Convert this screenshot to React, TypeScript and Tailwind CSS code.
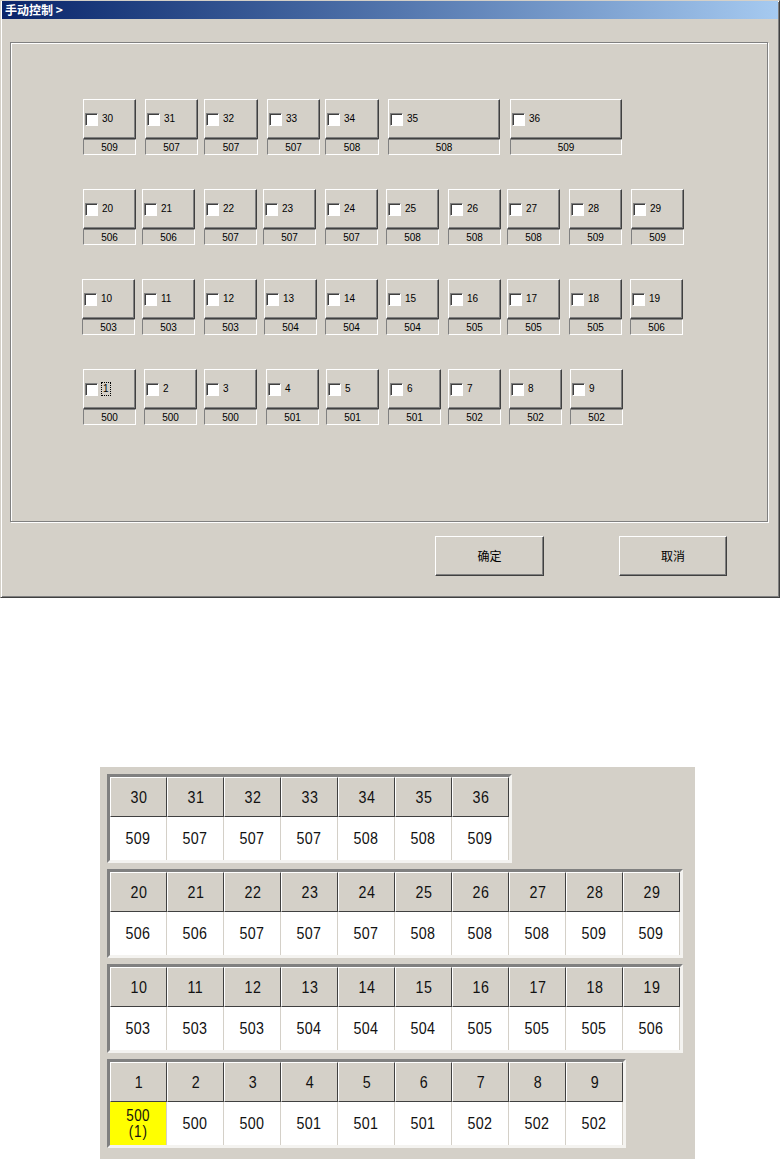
import React from 'react';

type Cell = { n: string; v: string; ml: string; w?: string; focus?: boolean };

const row1: Cell[] = [
  { n: '30', v: '509', ml: 'ml-[72px]' },
  { n: '31', v: '507', ml: 'ml-[9px]' },
  { n: '32', v: '507', ml: 'ml-[6px]', w: 'w-[54px]' },
  { n: '33', v: '507', ml: 'ml-[9px]' },
  { n: '34', v: '508', ml: 'ml-[5px]', w: 'w-[54px]' },
  { n: '35', v: '508', ml: 'ml-[9px]', w: 'w-[112px]' },
  { n: '36', v: '509', ml: 'ml-[10px]', w: 'w-[112px]' },
];

const row2: Cell[] = [
  { n: '20', v: '506', ml: 'ml-[72px]' },
  { n: '21', v: '506', ml: 'ml-[6px]' },
  { n: '22', v: '507', ml: 'ml-[9px]' },
  { n: '23', v: '507', ml: 'ml-[6px]' },
  { n: '24', v: '507', ml: 'ml-[9px]' },
  { n: '25', v: '508', ml: 'ml-[8px]' },
  { n: '26', v: '508', ml: 'ml-[9px]' },
  { n: '27', v: '508', ml: 'ml-[6px]' },
  { n: '28', v: '509', ml: 'ml-[9px]' },
  { n: '29', v: '509', ml: 'ml-[9px]' },
];

const row3: Cell[] = [
  { n: '10', v: '503', ml: 'ml-[71px]' },
  { n: '11', v: '503', ml: 'ml-[7px]' },
  { n: '12', v: '503', ml: 'ml-[9px]' },
  { n: '13', v: '504', ml: 'ml-[7px]' },
  { n: '14', v: '504', ml: 'ml-[8px]' },
  { n: '15', v: '504', ml: 'ml-[8px]' },
  { n: '16', v: '505', ml: 'ml-[9px]' },
  { n: '17', v: '505', ml: 'ml-[6px]' },
  { n: '18', v: '505', ml: 'ml-[9px]' },
  { n: '19', v: '506', ml: 'ml-[8px]' },
];

const row4: Cell[] = [
  { n: '1', v: '500', ml: 'ml-[72px]', focus: true },
  { n: '2', v: '500', ml: 'ml-[8px]' },
  { n: '3', v: '500', ml: 'ml-[7px]' },
  { n: '4', v: '501', ml: 'ml-[9px]' },
  { n: '5', v: '501', ml: 'ml-[7px]' },
  { n: '6', v: '501', ml: 'ml-[9px]' },
  { n: '7', v: '502', ml: 'ml-[7px]' },
  { n: '8', v: '502', ml: 'ml-[8px]' },
  { n: '9', v: '502', ml: 'ml-[8px]' },
];

const raised =
  'bg-[#d4d0c8] border border-t-white border-l-white border-b-[#404040] border-r-[#404040] shadow-[inset_-1px_-1px_0_#808080]';

const Check = () => (
  <span className="w-[13px] h-[13px] shrink-0 bg-white border border-t-[#808080] border-l-[#808080] border-b-white border-r-white shadow-[inset_1px_1px_0_#404040]" />
);

const ChannelButton = ({ cell }: { cell: Cell }) => (
  <div className={`flex flex-col ${cell.w ?? 'w-[53px]'} ${cell.ml}`}>
    <div className={`h-[40px] flex items-center pl-[1px] ${raised}`}>
      <Check />
      <span
        className={`ml-[4px] text-[10px] leading-[12px] text-black ${
          cell.focus ? 'outline outline-1 outline-dotted outline-black px-[1px]' : ''
        }`}
      >
        {cell.n}
      </span>
    </div>
    <div className="h-[16px] flex items-center justify-center text-[10px] text-black border border-t-[#808080] border-l-[#808080] border-b-white border-r-white">
      {cell.v}
    </div>
  </div>
);

const DialogRow = ({ cells }: { cells: Cell[] }) => (
  <div className="flex">
    {cells.map((c) => (
      <ChannelButton key={c.n} cell={c} />
    ))}
  </div>
);

type TCell = { n: string; v: string; hl?: boolean };

const t1: TCell[] = row1.map((c) => ({ n: c.n, v: c.v }));
const t2: TCell[] = row2.map((c) => ({ n: c.n, v: c.v }));
const t3: TCell[] = row3.map((c) => ({ n: c.n, v: c.v }));
const t4: TCell[] = row4.map((c, i) => ({ n: c.n, v: c.v, hl: i === 0 }));

const Num = ({ children }: { children: React.ReactNode }) => (
  <span className="inline-block scale-x-[0.84] text-[17px] leading-[17px] tracking-[0.5px] text-[#111]">
    {children}
  </span>
);

const Table = ({ cells }: { cells: TCell[] }) => (
  <div className="self-start border-[3px] border-t-[#808080] border-l-[#808080] border-b-[#f4f3f0] border-r-[#f4f3f0] shadow-[inset_1px_1px_0_#404040,inset_-1px_-1px_0_#c8c4bc]">
    <div className="flex">
      {cells.map((c) => (
        <div
          key={c.n}
          className="w-[57px] h-[40px] flex items-center justify-center bg-[#d4d0c8] border border-t-white border-l-white border-b-[#404040] border-r-[#404040]"
        >
          <Num>{c.n}</Num>
        </div>
      ))}
    </div>
    <div className="flex">
      {cells.map((c) => (
        <div
          key={c.n}
          className={`w-[57px] h-[43px] flex flex-col items-center justify-center border-r border-r-[#d4d0c8] ${
            c.hl ? 'bg-[#ffff00]' : 'bg-white'
          }`}
        >
          {c.hl ? (
            <>
              <span className="inline-block scale-x-[0.84] text-[16px] leading-[16px] tracking-[0.5px] text-[#111]">
                500
              </span>
              <span className="inline-block scale-x-[0.84] text-[16px] leading-[16px] tracking-[1px] text-[#111]">
                (1)
              </span>
            </>
          ) : (
            <Num>{c.v}</Num>
          )}
        </div>
      ))}
    </div>
  </div>
);

export default function App() {
  return (
    <div className="w-[780px] min-h-[1159px] bg-white font-['Liberation_Sans','Noto_Sans_CJK_SC',sans-serif]">
      {/* dialog */}
      <div className="w-[780px] h-[598px] flex flex-col bg-[#d4d0c8] border border-t-[#d4d0c8] border-l-[#d4d0c8] border-b-[#404040] border-r-[#404040] shadow-[inset_1px_1px_0_#fff,inset_-1px_-1px_0_#808080] px-[1px]">
        <div className="h-[18px] flex items-center pl-[3px] bg-linear-to-r from-[#0a246a] to-[#a6caf0] text-white text-[12px] font-bold font-['Noto_Sans_CJK_SC',sans-serif]">
          手动控制 &gt;
        </div>

        <div className="mt-[23px] ml-[8px] w-[758px] h-[480px] flex flex-col gap-[34px] pt-[56px] border border-[#808080] shadow-[inset_1px_1px_0_#fff,1px_1px_0_#fff]">
          <DialogRow cells={row1} />
          <DialogRow cells={row2} />
          <DialogRow cells={row3} />
          <DialogRow cells={row4} />
        </div>

        <div className="flex mt-[14px]">
          <button
            className={`ml-[433px] w-[109px] h-[40px] text-[12px] text-black font-['Noto_Sans_CJK_SC',sans-serif] ${raised}`}
          >
            确定
          </button>
          <button
            className={`ml-[75px] w-[108px] h-[40px] text-[12px] text-black font-['Noto_Sans_CJK_SC',sans-serif] ${raised}`}
          >
            取消
          </button>
        </div>
      </div>

      {/* overview panel */}
      <div className="mt-[169px] ml-[100px] w-[595px] h-[392px] bg-[#d4d0c8] flex flex-col gap-[6px] pt-[7px] pl-[7px]">
        <Table cells={t1} />
        <Table cells={t2} />
        <Table cells={t3} />
        <Table cells={t4} />
      </div>
    </div>
  );
}
